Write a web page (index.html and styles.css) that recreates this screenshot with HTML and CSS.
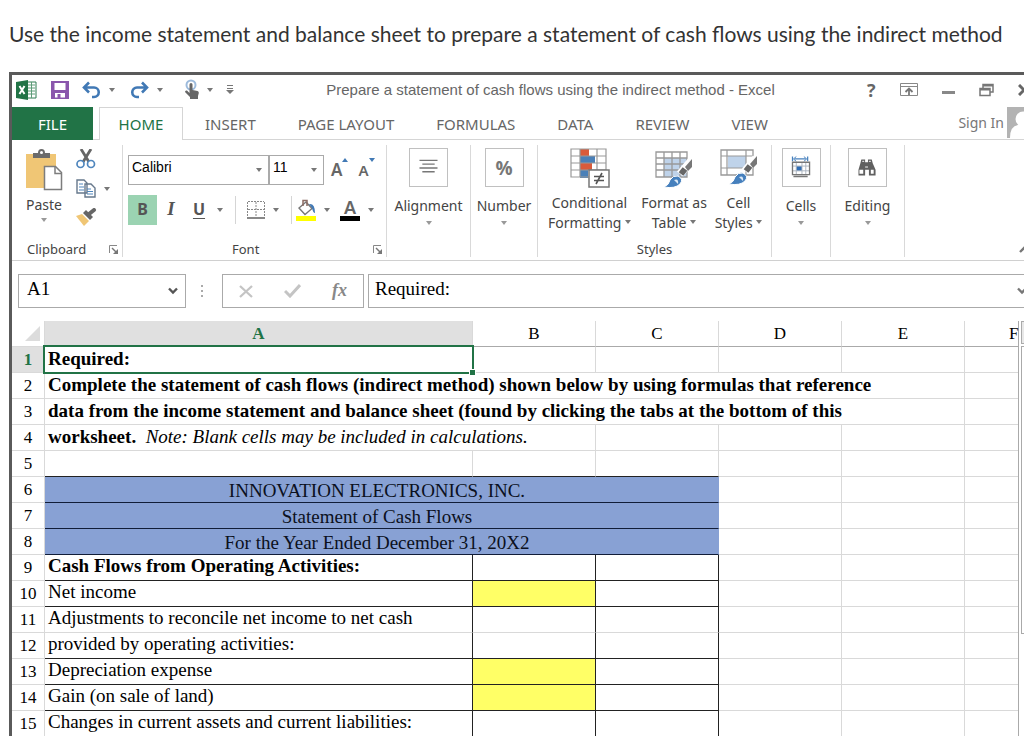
FILE: index.html
```html
<!DOCTYPE html>
<html lang="en">
<head>
<meta charset="utf-8">
<title>Prepare a statement of cash flows using the indirect method - Excel</title>
<link rel="stylesheet" href="styles.css">
</head>
<body>
<h1 class="task">Use the income statement and balance sheet to prepare a statement of cash flows using the indirect method</h1>
<main class="window">
  <header class="titlebar">
    <div class="quick">
      <svg width="22" height="22" viewBox="0 0 22 22" aria-label="Excel"><path d="M11 3h9v16h-9z" fill="#fff" stroke="#2f7d52"/><path d="M12 6h7M12 9h7M12 12h7M12 15h7M15.500 3v16" stroke="#5d9c78" fill="none"/><path d="M0 3 12 1v20L0 19z" fill="#217346"/><path d="M3.500 7l5 8M8.500 7l-5 8" stroke="#fff" stroke-width="2"/></svg>
      <button class="plain save" aria-label="Save"><svg width="18" height="18" viewBox="0 0 18 18"><path d="M0 0h18v18H0z" fill="#8a56ac"/><path d="M3.500 2h11v7h-11zM4 12h10v4.500H4z" fill="#fff"/><path d="M6.500 13h3v4h-3z" fill="#8a56ac"/></svg></button>
      <button class="plain undo" aria-label="Undo"><svg width="19" height="18" viewBox="0 0 19 18"><path d="M2 6.500h10a4.500 4.500 0 0 1 0 9.500H10M7 1.500l-5 5 5 5" fill="none" stroke="#4179b5" stroke-width="2.600"/></svg></button>
      <svg class="caret" width="6" height="4"><path d="M0 0h6L3 4z"/></svg>
      <button class="plain redo" aria-label="Redo"><svg width="19" height="18" viewBox="0 0 19 18"><path d="M17 6.500H7A4.500 4.500 0 0 0 7 16h2M12 1.500l5 5-5 5" fill="none" stroke="#4179b5" stroke-width="2.600"/></svg></button>
      <svg class="caret" width="6" height="4"><path d="M0 0h6L3 4z"/></svg>
      <button class="plain touch" aria-label="Touch mode"><svg width="16" height="22" viewBox="0 0 16 22"><circle cx="7" cy="6" r="4.500" fill="none" stroke="#9dbbdc" stroke-width="2"/><path d="M5.500 5.500a1.500 1.500 0 0 1 3 0V11l5 1q1.500.5 1.300 2L14 17v3H6v-2l-5-5q0-2 2-1.500L5.500 14z" fill="#666"/></svg></button>
      <svg class="caret" width="6" height="4"><path d="M0 0h6L3 4z"/></svg>
      <button class="plain more" aria-label="Customize toolbar"><svg width="8" height="9" viewBox="0 0 8 9"><path d="M1 .5h6M1 3.500h6" stroke="#777" stroke-width="1"/><path d="M0 5h8L4 9z" fill="#777"/></svg></button>
    </div>
    <div class="title">Prepare a statement of cash flows using the indirect method - Excel</div>
    <div class="controls">
      <button class="plain help" aria-label="Help">?</button>
      <button class="plain" aria-label="Ribbon display options"><svg width="18" height="14" viewBox="0 0 18 14"><path d="M.5.5h17v12H.5zM1 3.500h16" fill="none" stroke="#888"/><path d="M9 12V6M5.500 9 9 5.500 12.500 9" fill="none" stroke="#777" stroke-width="1.800"/></svg></button>
      <button class="plain" aria-label="Minimize"><svg width="13" height="14"><path d="M0 8h13v3H0z" fill="#888"/></svg></button>
      <button class="plain" aria-label="Restore"><svg width="15" height="14" viewBox="0 0 15 14"><path d="M4 5V1.500h10V9h-3" fill="none" stroke="#777" stroke-width="1.500"/><path d="M4 2.500h10" stroke="#777" stroke-width="2"/><path d="M1 5.500h10v7H1z" fill="#fff" stroke="#777" stroke-width="1.500"/><path d="M1 6.500h10" stroke="#777" stroke-width="2"/></svg></button>
      <button class="plain" aria-label="Close"><svg width="12" height="12" viewBox="0 0 12 12"><path d="M1 1l10 10M11 1 1 11" stroke="#666" stroke-width="3"/></svg></button>
    </div>
  </header>
  <nav class="tabs">
    <button class="tab file">FILE</button>
    <button class="tab home">HOME</button>
    <button class="tab">INSERT</button>
    <button class="tab">PAGE LAYOUT</button>
    <button class="tab">FORMULAS</button>
    <button class="tab">DATA</button>
    <button class="tab">REVIEW</button>
    <button class="tab">VIEW</button>
    <a class="signin" href="#">Sign In</a>
    <svg class="avatar" width="31" height="31" viewBox="0 0 31 31"><path d="M0 0h31v31H0z" fill="#b3b3b3"/><circle cx="16" cy="12" r="7.500" fill="#fff"/><path d="M3 31q0-12 8-13h10q8 1 8 13z" fill="#fff"/></svg>
  </nav>
  <section class="ribbon">
    <div class="group clipboard">
      <div class="tools">
        <button class="plain paste">
          <svg width="38" height="42" viewBox="0 0 38 42"><path d="M1 5h30v34H1z" fill="#f0c675"/><path d="M8 4h5q0-4 3.500-4T20 4h5v5H8z" fill="#6b6b6b"/><circle cx="16.500" cy="3.500" r="1.500" fill="#fff"/><path d="M19.500 17.500h11l6 6v17h-17z" fill="#fff" stroke="#7d7d7d" stroke-width="1.500"/><path d="M30 17.500v7h7" fill="none" stroke="#7d7d7d" stroke-width="1.500"/></svg>
          <span>Paste</span>
          <svg class="caret" width="6" height="4"><path d="M0 0h6L3 4z"/></svg>
        </button>
        <div class="stack">
          <button class="plain" aria-label="Cut"><svg width="20" height="20" viewBox="0 0 20 20"><path d="M5 0l8 13M15 0 7 13" stroke="#666" stroke-width="2.800"/><circle cx="4.500" cy="15" r="3.500" fill="#fff" stroke="#4f86bd" stroke-width="1.700"/><circle cx="15" cy="15" r="3.500" fill="#fff" stroke="#4f86bd" stroke-width="1.700"/></svg></button>
          <button class="plain copy" aria-label="Copy"><svg width="20" height="19" viewBox="0 0 20 19"><path d="M1 1h7l3 3v10H1zM9 5h6l4 4v9H9z" fill="#fff" stroke="#66788c" stroke-width="1.400"/><path d="M3 5h4M3 8h5M3 11h5M11 10h4M11 12.500h6M11 15h6" stroke="#4f86bd" stroke-width="1.200"/></svg><svg class="caret" width="6" height="4"><path d="M0 0h6L3 4z"/></svg></button>
          <button class="plain" aria-label="Format painter"><svg width="21" height="18" viewBox="0 0 21 18"><path d="M0 8 6 6l7 7-5 5z" fill="#f0c675"/><path d="M7 5l3-3 7 7-3 3z" fill="#666"/><path d="M13 6l5-4" stroke="#666" stroke-width="4" stroke-linecap="round"/></svg></button>
        </div>
      </div>
      <div class="caption"><span>Clipboard</span><button class="plain" aria-label="Clipboard settings"><svg class="launch" width="9" height="9" viewBox="0 0 9 9"><path d="M.5 8V.5H8" fill="none" stroke="#888"/><path d="M3 3l4 4" stroke="#777" stroke-width="1.400"/><path d="M9 4v5H4z" fill="#777"/></svg></button></div>
    </div>
    <div class="group font">
      <div class="tools rows">
        <div class="fontrow">
          <label class="pick family"><select aria-label="Font family"><option>Calibri</option></select><svg class="caret" width="6" height="4"><path d="M0 0h6L3 4z"/></svg></label>
          <label class="pick size"><select aria-label="Font size"><option>11</option></select><svg class="caret" width="6" height="4"><path d="M0 0h6L3 4z"/></svg></label>
          <button class="plain grow" aria-label="Increase font size"><span>A</span><svg width="6" height="4"><path d="M0 4h6L3 0z" fill="#4179b5"/></svg></button>
          <button class="plain shrink" aria-label="Decrease font size"><span>A</span><svg width="6" height="4"><path d="M0 0h6L3 4z" fill="#4179b5"/></svg></button>
        </div>
        <div class="fontrow">
          <button class="plain letter bold">B</button>
          <button class="plain letter italic">I</button>
          <button class="plain letter under">U</button>
          <svg class="caret" width="6" height="4"><path d="M0 0h6L3 4z"/></svg>
          <i class="rule"></i>
          <button class="plain" aria-label="Borders"><svg width="18" height="18" viewBox="0 0 18 18"><path d="M1 .5h16M.5 1v15M17.500 1v15M9 1v15M1 8.500h16" stroke="#888" stroke-dasharray="2 1" fill="none"/><path d="M0 17h18" stroke="#888" stroke-width="2"/></svg></button>
          <svg class="caret" width="6" height="4"><path d="M0 0h6L3 4z"/></svg>
          <i class="rule second"></i>
          <button class="plain" aria-label="Fill color"><svg width="20" height="22" viewBox="0 0 20 22"><path d="M10 3l6 6.500-7 6L3 9z" fill="#fff" stroke="#777" stroke-width="1.400"/><path d="M7 7V1.500h4V7" fill="none" stroke="#8b6b63" stroke-width="1.500"/><path d="M13 5q6-1 6 9-2 0-3-5z" fill="#4179b5"/><path d="M0 17h20v5H0z" fill="#ff0"/></svg></button>
          <svg class="caret" width="6" height="4"><path d="M0 0h6L3 4z"/></svg>
          <button class="plain color" aria-label="Font color">A</button>
          <svg class="caret" width="6" height="4"><path d="M0 0h6L3 4z"/></svg>
        </div>
      </div>
      <div class="caption"><span>Font</span><button class="plain" aria-label="Font settings"><svg class="launch" width="9" height="9" viewBox="0 0 9 9"><path d="M.5 8V.5H8" fill="none" stroke="#888"/><path d="M3 3l4 4" stroke="#777" stroke-width="1.400"/><path d="M9 4v5H4z" fill="#777"/></svg></button></div>
    </div>
    <div class="group alignment">
      <button class="plain big"><svg class="tile" width="39" height="39" viewBox="0 0 39 39"><path d="M10 12h19M13 16h13M10 20h19M13 24h13" stroke="#777" stroke-width="1.400"/></svg><span>Alignment</span><svg class="caret" width="6" height="4"><path d="M0 0h6L3 4z"/></svg></button>
    </div>
    <div class="group number">
      <button class="plain big"><b class="tile percent">%</b><span>Number</span><svg class="caret" width="6" height="4"><path d="M0 0h6L3 4z"/></svg></button>
    </div>
    <div class="group styles">
      <div class="tools">
        <button class="plain two cond"><svg width="40" height="40" viewBox="0 0 40 40"><path d="M1 1h35v29H1z" fill="#fff"/><path d="M10 1h9v7h-9zM10 15h12v7H10z" fill="#d95b3b"/><path d="M10 8h15v7H10zM10 22h8v8h-8z" fill="#4a80b8"/><path d="M1 1h35v28H1zM10 1v28M1 8h35M1 15h35M1 22h35M27 1v28" fill="none" stroke="#999" stroke-width="1.200"/><path d="M19 22h20v17H19z" fill="#fff" stroke="#777" stroke-width="1.500"/><path d="M24 28.500h10M24 32.500h10M32 25l-6 11" stroke="#555" stroke-width="1.600"/></svg><span>Conditional<br>Formatting <svg class="caret" width="6" height="4"><path d="M0 0h6L3 4z"/></svg></span></button>
        <button class="plain two table-style"><svg width="40" height="40" viewBox="0 0 40 40"><path d="M2 4h31v25H2z" fill="#fff"/><path d="M10 10h23v19H10z" fill="#bfd3ea"/><path d="M2 4h31v25H2zM10 4v25M18 4v25M26 4v25M2 10h31M2 16h31M2 22h31" fill="none" stroke="#999" stroke-width="1.300"/><path d="M26 26 37 13" stroke="#fff" stroke-width="8"/><path d="M27 26 31 21" stroke="#666" stroke-width="6"/><path d="M31 19l7-8v8l-4 4z" fill="#777"/><path d="M10 39q5-2 6-7 3-5 8-4 6 3 2 8-5 5-16 3z" fill="#4680bd" stroke="#fff"/><path d="M20 32q5-2 4 4" fill="#dce9f6"/></svg><span>Format as<br>Table <svg class="caret" width="6" height="4"><path d="M0 0h6L3 4z"/></svg></span></button>
        <button class="plain two cell-style"><svg width="40" height="40" viewBox="0 0 40 40"><path d="M2 2h32v25H2z" fill="#fff" stroke="#999" stroke-width="1.300"/><path d="M9 8h18v12H9z" fill="#bfd3ea"/><path d="M8 2v25M27 2v25M2 8h32M2 20h32" fill="none" stroke="#999" stroke-width="1.200"/><path d="M26 23 37 10" stroke="#fff" stroke-width="8"/><path d="M27 23 31 18" stroke="#666" stroke-width="6"/><path d="M31 16l7-8v8l-4 4z" fill="#777"/><path d="M10 36q5-2 6-7 3-5 8-4 6 3 2 8-5 5-16 3z" fill="#4680bd" stroke="#fff"/><path d="M20 29q5-2 4 4" fill="#dce9f6"/></svg><span>Cell<br>Styles <svg class="caret" width="6" height="4"><path d="M0 0h6L3 4z"/></svg></span></button>
      </div>
      <div class="caption"><span>Styles</span></div>
    </div>
    <div class="group cells">
      <button class="plain big"><svg class="tile" width="39" height="39" viewBox="0 0 39 39"><path d="M10 8v5M26 8v5M12 10.500h12" stroke="#4680bd" stroke-width="1.300"/><path d="M14 8l-3 2.500 3 2.500M22 8l3 2.500-3 2.500" stroke="#4680bd" fill="none"/><path d="M10 14h18v13H10z" fill="#fff"/><path d="M14 18h6v5h-6z" fill="#2f6db5"/><path d="M14 14v13M20 14v13M24 14v13M10 18h18M10 23h18" fill="none" stroke="#aab4c0"/><path d="M10 14h18v13H10zM11 29h15" fill="none" stroke="#777" stroke-width="1.400"/></svg><span>Cells</span><svg class="caret" width="6" height="4"><path d="M0 0h6L3 4z"/></svg></button>
    </div>
    <div class="group editing">
      <button class="plain big"><svg class="tile" width="39" height="39" viewBox="0 0 39 39"><path d="M13 11h4v3h3v-3h4l1 4 3 7v6h-7v-6h-4v6h-7v-6l2-7z" fill="#606060"/><path d="M11 22h4v4h-4zM23 22h3v4h-3z" fill="#fff"/><path d="M14 13h2M21 13h2M17 19h3" stroke="#fff"/></svg><span>Editing</span><svg class="caret" width="6" height="4"><path d="M0 0h6L3 4z"/></svg></button>
    </div>
    <button class="plain collapse" aria-label="Collapse ribbon"><svg width="12" height="8" viewBox="0 0 12 8"><path d="M1 7l5-5 5 5" fill="none" stroke="#777" stroke-width="2.400"/></svg></button>
  </section>
  <section class="formulabar">
    <div class="box namebox"><input aria-label="Name box" value="A1"><svg width="10" height="8" viewBox="0 0 10 8"><path d="M1 1.500l4 4 4-4" fill="none" stroke="#555" stroke-width="2.400"/></svg></div>
    <svg class="dots" width="3" height="13"><path d="M0 0h2v2H0zM0 5h2v2H0zM0 10h2v2H0z" fill="#aaa"/></svg>
    <div class="box actions">
      <button class="plain" aria-label="Cancel"><svg width="14" height="13" viewBox="0 0 14 13"><path d="M1 1l12 11M13 1 1 12" stroke="#c4c4c4" stroke-width="2.300"/></svg></button>
      <button class="plain" aria-label="Enter"><svg width="17" height="14" viewBox="0 0 17 14"><path d="M1 7l5 5L16 1" fill="none" stroke="#c4c4c4" stroke-width="3"/></svg></button>
      <button class="plain fx" aria-label="Insert function"><i>f</i><i class="sub">x</i></button>
    </div>
    <div class="box formula"><input aria-label="Formula" value="Required:"><svg width="10" height="8" viewBox="0 0 10 8"><path d="M1 1.500l4 4 4-4" fill="none" stroke="#777" stroke-width="2.400"/></svg></div>
  </section>
  <section class="sheet">
    <table class="grid">
      <colgroup><col class="c-num"><col class="c-a"><col class="c-n"><col class="c-n"><col class="c-n"><col class="c-n"><col></colgroup>
      <thead><tr><th class="corner"><svg width="15" height="15"><path d="M15 0v15H0z" fill="#dcdcdc"/></svg></th><th class="active">A</th><th>B</th><th>C</th><th>D</th><th>E</th><th class="last">F</th></tr></thead>
      <tbody>
        <tr><th class="active">1</th><td class="selected"><b>Required:</b><i class="frame"></i></td><td></td><td></td><td></td><td></td><td></td></tr>
        <tr><th>2</th><td colspan="5"><b>Complete the statement of cash flows (indirect method) shown below by using formulas that reference</b></td><td></td></tr>
        <tr><th>3</th><td colspan="5"><b>data from the income statement and balance sheet (found by clicking the tabs at the bottom of this</b></td><td></td></tr>
        <tr><th>4</th><td colspan="2"><b>worksheet.</b>&nbsp; <em>Note: Blank cells may be included in calculations.</em></td><td></td><td></td><td></td><td></td></tr>
        <tr><th>5</th><td class="line"></td><td class="line"></td><td class="line"></td><td></td><td></td><td></td></tr>
        <tr><th>6</th><td class="band" colspan="3">INNOVATION ELECTRONICS, INC.</td><td></td><td></td><td></td></tr>
        <tr><th>7</th><td class="band" colspan="3">Statement of Cash Flows</td><td></td><td></td><td></td></tr>
        <tr><th>8</th><td class="band" colspan="3">For the Year Ended December 31, 20X2</td><td></td><td></td><td></td></tr>
        <tr class="item"><th>9</th><td class="line edge"><b>Cash Flows from Operating Activities:</b></td><td class="line edge"></td><td class="line edge"></td><td></td><td></td><td></td></tr>
        <tr class="item"><th>10</th><td class="line edge">Net income</td><td class="line edge entry"></td><td class="line edge"></td><td></td><td></td><td></td></tr>
        <tr class="item"><th>11</th><td class="edge">Adjustments to reconcile net income to net cash</td><td class="edge"></td><td class="edge"></td><td></td><td></td><td></td></tr>
        <tr class="item"><th>12</th><td class="line edge">provided by operating activities:</td><td class="line edge"></td><td class="line edge"></td><td></td><td></td><td></td></tr>
        <tr class="item"><th>13</th><td class="line edge">Depreciation expense</td><td class="line edge entry"></td><td class="line edge"></td><td></td><td></td><td></td></tr>
        <tr class="item"><th>14</th><td class="line edge">Gain (on sale of land)</td><td class="line edge entry"></td><td class="line edge"></td><td></td><td></td><td></td></tr>
        <tr class="item"><th>15</th><td class="line edge">Changes in current assets and current liabilities:</td><td class="line edge"></td><td class="line edge"></td><td></td><td></td><td></td></tr>
      </tbody>
    </table>
    <div class="scroll"><div class="up"></div><div class="thumb"></div></div>
  </section>
</main>
</body>
</html>
```
FILE: styles.css
```css
* { box-sizing: border-box; }
body { margin: 0; height: 100vh; overflow: hidden; background: #fff; color: #444; font-family: "Noto Sans", "Open Sans", sans-serif; }
svg { display: block; flex: none; }
.plain { border: 0; padding: 0; background: none; color: inherit; font: inherit; display: flex; align-items: center; flex: none; }
.caret { fill: #777; }
.task { margin: 0; padding: 22px 0 0 9px; height: 72px; font: 400 21px/24px Lato, sans-serif; color: #333; white-space: nowrap; }
.window { margin-left: 9px; border-left: 3px solid #5a5a5a; border-top: 3px solid #5a5a5a; }

.titlebar { display: flex; align-items: center; height: 32px; padding: 0 0 3px 4px; }
.quick { display: flex; align-items: center; height: 26px; }
.save { margin-left: 13px; }
.undo { margin: 0 8px 0 13px; }
.redo { margin: 0 8px 0 15px; }
.touch { margin: 0 7px 0 21px; }
.more { margin-left: 13px; }
.title { flex: 1; text-align: center; font: 15px/20px "Liberation Sans", sans-serif; color: #666; white-space: nowrap; }
.controls { display: flex; flex: none; align-items: center; gap: 24px; width: 157px; }
.help { font: bold 18px/24px "Open Sans", sans-serif; color: #666; }

.tabs { display: flex; height: 33px; font-size: 15px; box-shadow: inset 0 -1px #d5d5d5; }
.tab { border: 0; background: none; padding: 0 21px; font: inherit; color: #666; white-space: nowrap; }
.tab.file { width: 81px; margin-right: 6px; padding: 0; background: #217346; color: #fff; }
.tab.home { width: 84px; margin-right: 1px; padding: 0; background: #fff; color: #217346; border: 1px solid #d5d5d5; border-bottom: 0; }
.signin { margin-left: auto; font-size: 14px; line-height: 31px; color: #777; text-decoration: none; white-space: nowrap; }
.avatar { margin: 0 -14px 0 3px; }

.ribbon { display: flex; height: 121px; padding: 5px 0 3px; border-bottom: 1px solid #d0d0d0; font-size: 14px; }
.group { display: flex; flex-direction: column; flex: none; border-right: 1px solid #d9d9d9; }
.tools { display: flex; flex: 1; }
.caption { display: flex; align-items: center; justify-content: center; height: 18px; font-size: 13px; line-height: 18px; margin-bottom: -1px; }
.clipboard { width: 111px; padding-left: 12px; }
.clipboard .caption { justify-content: space-between; padding: 0 4px 0 3px; }
.paste { flex-direction: column; width: 40px; padding-top: 4px; }
.paste span { margin: 4px 0 3px; line-height: 20px; }
.stack { display: flex; flex-direction: column; gap: 10px; padding: 4px 0 0 12px; }
.copy { gap: 8px; }
.font { width: 264px; padding-left: 5px; }
.font .caption { padding: 0 4px 0 104px; justify-content: space-between; }
.rows { flex-direction: column; gap: 10px; padding-top: 10px; }
.fontrow { display: flex; align-items: center; height: 30px; }
.pick { position: relative; height: 30px; }
.pick select { appearance: none; width: 100%; height: 100%; border: 1px solid #aaa; border-radius: 0; background: #fff; padding: 0 3px 6px; font: 14px "Liberation Sans", sans-serif; color: #000; }
.pick .caret { position: absolute; right: 7px; top: 13px; }
.family { width: 141px; }
.size { width: 55px; }
.grow, .shrink { align-items: flex-start; font-weight: 600; font-size: 17px; line-height: 24px; color: #666; }
.grow { margin-left: 7px; }
.shrink { margin-left: 10px; font-size: 15px; }
.letter { width: 28px; height: 30px; padding-bottom: 3px; justify-content: center; font: bold 16px "Noto Sans", sans-serif; color: #555; }
.bold { width: 29px; background: #9bd3b2; }
.italic { font-family: "Liberation Serif", serif; font-style: italic; font-size: 19px; }
.under { text-decoration: underline; text-underline-offset: 3px; margin-right: 4px; }
.rule { width: 1px; height: 28px; margin: 0 11px 0 12px; background: #d5d5d5; }
.rule.second { margin: 0 4px 0 12px; }
.fontrow button + svg.caret { margin-left: 8px; }
.fontrow .under + svg.caret { margin-left: 0; }
.color { width: 20px; height: 22px; margin-left: 10px; justify-content: center; border-bottom: 5px solid #000; font: 600 18px/17px "Noto Sans", sans-serif; color: #666; }
.big { flex-direction: column; padding-top: 3px; }
.big span { margin: 9px 0 5px; line-height: 20px; }
.big .caret, .paste .caret { fill: #999; }
.tile { width: 39px; height: 39px; border: 1px solid #c0c0c0; }
.percent { display: flex; align-items: center; justify-content: center; font: bold 19px "Open Sans", sans-serif; color: #777; }
.alignment { width: 84px; }
.number { width: 67px; }
.styles { width: 234px; }
.cells { width: 59px; }
.editing { width: 74px; }
.two { flex-direction: column; padding-top: 3px; }
.two span { line-height: 20px; margin-top: 5px; text-align: center; white-space: nowrap; }
.two .caret { display: inline-block; vertical-align: 4px; }
.cond { width: 103px; }
.table-style { width: 66px; }
.cell-style { width: 63px; }
.collapse { margin: auto -7px 4px auto; }

.formulabar { display: flex; align-items: center; height: 60px; padding-left: 6px; }
.box { display: flex; align-items: center; height: 34px; border: 1px solid #aaa; background: #fff; }
.box input { flex: 1; min-width: 0; border: 0; padding: 0 0 4px; background: none; outline: 0; font: 19px "Liberation Serif", serif; color: #000; }
.namebox { width: 168px; padding: 0 7px 0 8px; }
.dots { margin: 0 18px 0 15px; }
.actions { width: 142px; justify-content: space-between; padding: 0 16px; }
.fx { padding-bottom: 3px; font: bold 18px/20px "Liberation Serif", serif; color: #888; }
.formula { flex: 1; margin: 0 -4px 0 4px; padding-left: 6px; }

.sheet { display: flex; }
.grid { flex: 1; table-layout: fixed; width: 100%; border-spacing: 0; border-right: 1px solid #aaa; font: 19px/20px "Liberation Serif", serif; color: #000; }
.c-num { width: 33px; }
.c-a { width: 428px; }
.c-n { width: 123px; }
.grid th, .grid td { height: 26px; padding: 0 0 2px 3px; border: 0 solid #d9d9d9; border-width: 0 1px 1px 0; text-align: left; white-space: nowrap; }
.grid th { padding: 1px 0 0; text-align: center; font-weight: 400; font-size: 17px; }
.grid thead th { border-bottom-color: #aaa; }
.grid th.active { background: #e0e0e0; color: #217346; font-weight: 700; }
.grid thead .corner { padding: 0 0 0 13px; border-bottom-color: #d9d9d9; }
.grid thead .last { padding-left: 44px; }
.grid td:last-child, .grid .last { border-right: 0; }
.grid .line { border-bottom-color: #222; }
.grid .edge { border-right-color: #222; }
.grid .item td { padding-bottom: 4px; }
.grid .entry { background: #ffff66; }
.grid .band { padding: 2px 9px 0 0; background: #88a1d4; border-color: #111d38; border-right-color: #88a1d4; text-align: center; color: #0b1020; }
.grid .selected { position: relative; }
.frame { position: absolute; inset: -2px; border: 2px solid #217346; }
.frame::after { content: ""; position: absolute; right: -3px; bottom: -3px; width: 5px; height: 5px; background: #217346; outline: 1px solid #fff; }
.scroll { width: 5px; padding-left: 2px; }
.up { height: 23px; border: 1px solid #aaa; border-right: 0; background: #e8e8e8; }
.thumb { height: 288px; margin-top: 2px; border: 1px solid #aaa; border-right: 0; }
```
